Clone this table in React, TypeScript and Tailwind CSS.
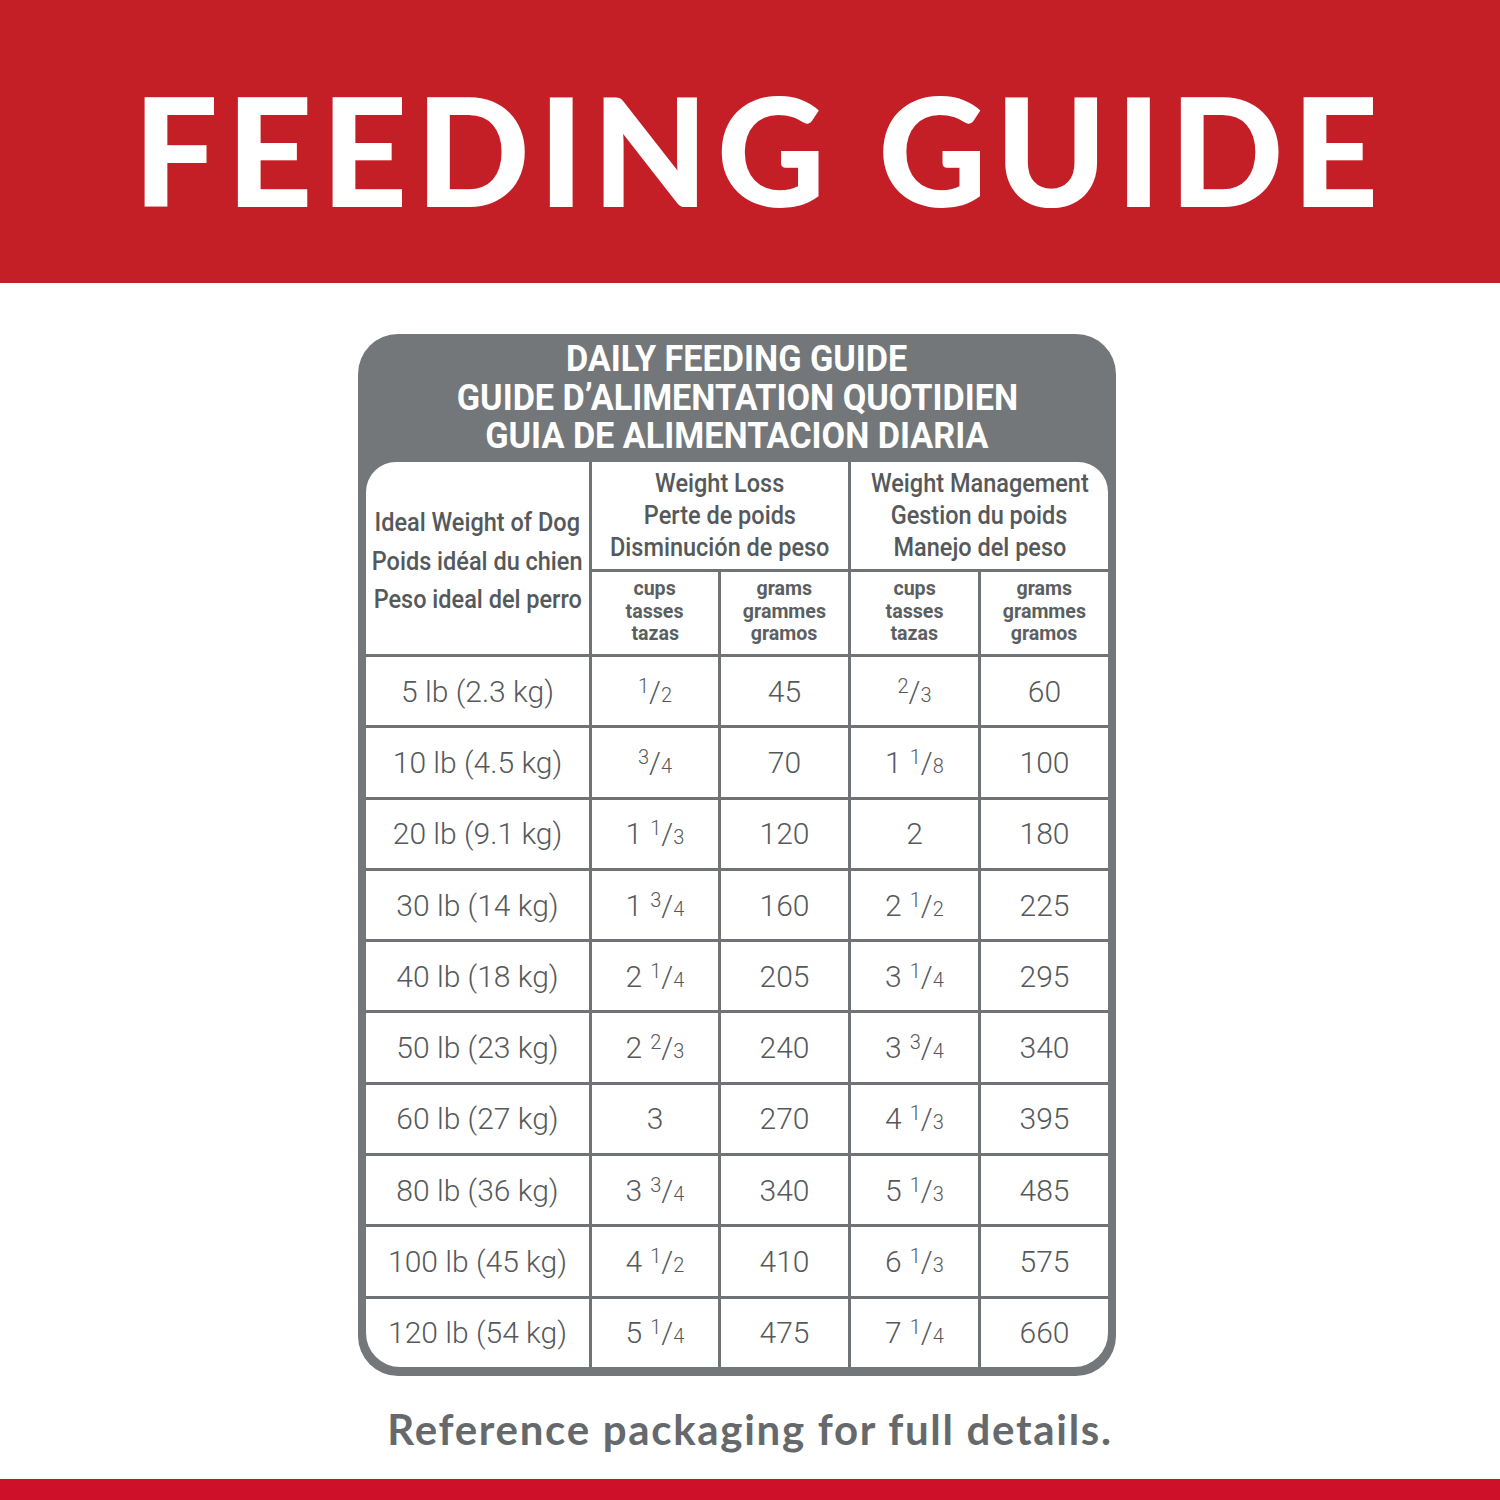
import type { ReactNode } from "react";

// Roboto squeezed a little stands in for the pack's condensed grotesk
const roboto = { fontFamily: 'Roboto, "Liberation Sans", sans-serif' };
const rounded = { fontFamily: 'Lato, "Open Sans", sans-serif' };

function Frac({ whole, n, d }: { whole?: string; n: string; d: string }) {
  return (
    <span className="inline-flex items-baseline">
      {whole && <span className="mr-[8px]">{whole}</span>}
      <span className="relative -top-[9px] text-[20px]">{n}</span>
      <span>/</span>
      <span className="text-[20px]">{d}</span>
    </span>
  );
}

type Row = {
  weight: string;
  lossCups: ReactNode;
  lossGrams: string;
  mgmtCups: ReactNode;
  mgmtGrams: string;
};

const rows: Row[] = [
  { weight: "5 lb (2.3 kg)", lossCups: <Frac n="1" d="2" />, lossGrams: "45", mgmtCups: <Frac n="2" d="3" />, mgmtGrams: "60" },
  { weight: "10 lb (4.5 kg)", lossCups: <Frac n="3" d="4" />, lossGrams: "70", mgmtCups: <Frac whole="1" n="1" d="8" />, mgmtGrams: "100" },
  { weight: "20 lb (9.1 kg)", lossCups: <Frac whole="1" n="1" d="3" />, lossGrams: "120", mgmtCups: "2", mgmtGrams: "180" },
  { weight: "30 lb (14 kg)", lossCups: <Frac whole="1" n="3" d="4" />, lossGrams: "160", mgmtCups: <Frac whole="2" n="1" d="2" />, mgmtGrams: "225" },
  { weight: "40 lb (18 kg)", lossCups: <Frac whole="2" n="1" d="4" />, lossGrams: "205", mgmtCups: <Frac whole="3" n="1" d="4" />, mgmtGrams: "295" },
  { weight: "50 lb (23 kg)", lossCups: <Frac whole="2" n="2" d="3" />, lossGrams: "240", mgmtCups: <Frac whole="3" n="3" d="4" />, mgmtGrams: "340" },
  { weight: "60 lb (27 kg)", lossCups: "3", lossGrams: "270", mgmtCups: <Frac whole="4" n="1" d="3" />, mgmtGrams: "395" },
  { weight: "80 lb (36 kg)", lossCups: <Frac whole="3" n="3" d="4" />, lossGrams: "340", mgmtCups: <Frac whole="5" n="1" d="3" />, mgmtGrams: "485" },
  { weight: "100 lb (45 kg)", lossCups: <Frac whole="4" n="1" d="2" />, lossGrams: "410", mgmtCups: <Frac whole="6" n="1" d="3" />, mgmtGrams: "575" },
  { weight: "120 lb (54 kg)", lossCups: <Frac whole="5" n="1" d="4" />, lossGrams: "475", mgmtCups: <Frac whole="7" n="1" d="4" />, mgmtGrams: "660" },
];

function Cell({ children }: { children: ReactNode }) {
  return (
    <div
      className="flex h-[68.3px] items-center justify-center bg-white text-[30px] font-light text-[#55595b]"
      style={roboto}
    >
      {children}
    </div>
  );
}

function UnitCell({ lines }: { lines: string[] }) {
  return (
    <div
      className="flex flex-col items-center justify-start bg-white pt-[5px] text-[20px] font-bold leading-[22.5px] text-[#5b5f61]"
      style={roboto}
    >
      {lines.map((l) => (
        <span key={l} className="inline-block scale-x-[0.98] whitespace-nowrap">
          {l}
        </span>
      ))}
    </div>
  );
}

function HeadCell({ lines, span }: { lines: string[]; span: string }) {
  return (
    <div
      className={`${span} flex flex-col items-center bg-white text-[25px] font-medium text-[#55595b]`}
      style={roboto}
    >
      {lines.map((l) => (
        <span key={l} className="inline-block scale-x-[0.94] whitespace-nowrap">
          {l}
        </span>
      ))}
    </div>
  );
}

export default function App() {
  return (
    <div className="flex h-[1500px] w-[1500px] flex-col bg-white">
      <div className="flex h-[283px] items-center justify-center bg-[#c41f26] pl-[20px] pt-[14px]">
        <h1
          className="text-[150px] font-black leading-none tracking-[8.5px] text-white"
          style={rounded}
        >
          FEEDING GUIDE
        </h1>
      </div>

      <div className="pl-[358px] pt-[51px]">
        <div className="w-[758px] rounded-[40px] bg-[#737779] px-[8px] pb-[9px]">
          <div
            className="flex h-[128px] flex-col items-center pt-[6px] text-[36px] font-bold leading-[38.5px] text-white"
            style={roboto}
          >
            <span className="inline-block scale-x-[0.95] whitespace-nowrap">DAILY FEEDING GUIDE</span>
            <span className="inline-block scale-x-[0.95] whitespace-nowrap">GUIDE D’ALIMENTATION QUOTIDIEN</span>
            <span className="inline-block scale-x-[0.95] whitespace-nowrap">GUIA DE ALIMENTACION DIARIA</span>
          </div>

          <div className="grid grid-cols-[223px_126px_127px_127px_127px] grid-rows-[107px_82px] gap-[3px] overflow-hidden rounded-b-[34px] rounded-t-[30px] bg-[#6f7375]">
            <HeadCell
              span="row-span-2 pt-[42px] leading-[38.5px]"
              lines={["Ideal Weight of Dog", "Poids idéal du chien", "Peso ideal del perro"]}
            />
            <HeadCell
              span="col-span-2 justify-center leading-[32px]"
              lines={["Weight Loss", "Perte de poids", "Disminución de peso"]}
            />
            <HeadCell
              span="col-span-2 justify-center leading-[32px]"
              lines={["Weight Management", "Gestion du poids", "Manejo del peso"]}
            />
            <UnitCell lines={["cups", "tasses", "tazas"]} />
            <UnitCell lines={["grams", "grammes", "gramos"]} />
            <UnitCell lines={["cups", "tasses", "tazas"]} />
            <UnitCell lines={["grams", "grammes", "gramos"]} />

            {rows.map((r) => (
              <div key={r.weight} className="contents">
                <Cell>{r.weight}</Cell>
                <Cell>{r.lossCups}</Cell>
                <Cell>{r.lossGrams}</Cell>
                <Cell>{r.mgmtCups}</Cell>
                <Cell>{r.mgmtGrams}</Cell>
              </div>
            ))}
          </div>
        </div>
      </div>

      <p
        className="mt-[32px] text-center text-[42px] font-bold leading-none tracking-[1.7px] text-[#66696b]"
        style={rounded}
      >
        Reference packaging for full details.
      </p>

      <div className="mt-auto h-[21px] bg-[#cf1029]" />
    </div>
  );
}
